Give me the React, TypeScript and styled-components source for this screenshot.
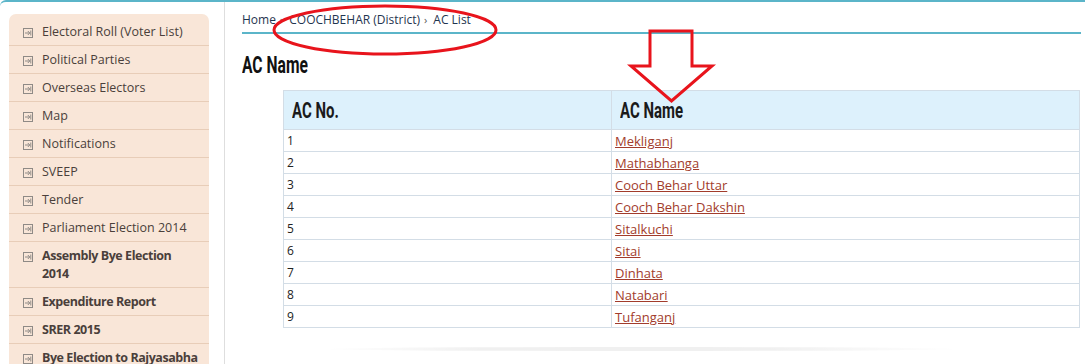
import { FC } from 'react';
import styled, { createGlobalStyle } from 'styled-components';

const GlobalStyle = createGlobalStyle`
  html, body {
    margin: 0;
    padding: 0;
    background: #fff;
    font-family: 'Open Sans', 'DejaVu Sans', sans-serif;
  }
`;

type MenuItem = { label: string; bold?: boolean };

const menu: MenuItem[] = [
  { label: 'Electoral Roll (Voter List)' },
  { label: 'Political Parties' },
  { label: 'Overseas Electors' },
  { label: 'Map' },
  { label: 'Notifications' },
  { label: 'SVEEP' },
  { label: 'Tender' },
  { label: 'Parliament Election 2014' },
  { label: 'Assembly Bye Election 2014', bold: true },
  { label: 'Expenditure Report', bold: true },
  { label: 'SRER 2015', bold: true },
  { label: 'Bye Election to Rajyasabha', bold: true },
];

const acList = [
  'Mekliganj',
  'Mathabhanga',
  'Cooch Behar Uttar',
  'Cooch Behar Dakshin',
  'Sitalkuchi',
  'Sitai',
  'Dinhata',
  'Natabari',
  'Tufanganj',
];

const EnterIcon: FC = () => (
  <svg width="10" height="10" viewBox="0 0 10 10" fill="none">
    <rect x="0.5" y="0.5" width="9" height="9" stroke="#8f8a86" />
    <path d="M2 5H6.5M4.8 3L6.8 5L4.8 7M7.8 2.5V7.5" stroke="#8f8a86" />
  </svg>
);

const App: FC = () => {
  return (
    <>
      <GlobalStyle />
      <Page>
        <Sidebar>
          <Menu>
            {menu.map((item) => (
              <MenuRow key={item.label}>
                <IconBox>
                  <EnterIcon />
                </IconBox>
                <MenuLabel $bold={item.bold}>{item.label}</MenuLabel>
              </MenuRow>
            ))}
          </Menu>
        </Sidebar>
        <Content>
          <Breadcrumb>
            <Crumb>Home</Crumb>
            <Sep>›</Sep>
            <Crumb>COOCHBEHAR (District)</Crumb>
            <Sep>›</Sep>
            <Crumb>AC List</Crumb>
          </Breadcrumb>
          <Heading>
            <Condensed $size={23}>AC Name</Condensed>
          </Heading>
          <Table>
            <colgroup>
              <col style={{ width: 328 }} />
              <col />
            </colgroup>
            <thead>
              <tr>
                <Th>
                  <Condensed $size={22}>AC No.</Condensed>
                </Th>
                <Th>
                  <Condensed $size={22}>AC Name</Condensed>
                </Th>
              </tr>
            </thead>
            <tbody>
              {acList.map((name, i) => (
                <tr key={name}>
                  <Td>{i + 1}</Td>
                  <Td>
                    <AcLink href="#">{name}</AcLink>
                  </Td>
                </tr>
              ))}
            </tbody>
          </Table>
          <Shadow />
        </Content>
        <Annotation width="1085" height="110" viewBox="0 0 1085 110">
          <ellipse
            cx="385"
            cy="28"
            rx="111"
            ry="24"
            fill="none"
            stroke="#e8141c"
            strokeWidth="3"
          />
          <path
            d="M650 29H692V64H712L671.5 99L631 64H650Z"
            fill="none"
            stroke="#e8141c"
            strokeWidth="3"
            strokeLinejoin="miter"
          />
        </Annotation>
      </Page>
    </>
  );
};

export default App;

const Page = styled.div`
  position: relative;
  display: flex;
  width: 1085px;
  height: 364px;
  overflow: hidden;
  border-top: 2px solid #5bb5c9;
  border-top-left-radius: 6px;
  box-sizing: border-box;
`;

const Sidebar = styled.aside`
  width: 225px;
  flex-shrink: 0;
  padding: 12px 0 0 9px;
  box-sizing: border-box;
  border-right: 1px solid #dedede;
`;

const Menu = styled.ul`
  width: 200px;
  margin: 0;
  padding: 4px 0 0;
  list-style: none;
  background: #f9e6d8;
  border-top-left-radius: 7px;
  border-top-right-radius: 7px;
`;

const MenuRow = styled.li`
  display: flex;
  align-items: flex-start;
  padding: 5px 10px 4px 14px;
  border-bottom: 1px solid #e8cdb8;
`;

const IconBox = styled.span`
  display: flex;
  flex-shrink: 0;
  padding-top: 5px;
  margin-right: 9px;
`;

const MenuLabel = styled.span<{ $bold?: boolean }>`
  font-size: 12.5px;
  line-height: 18px;
  color: #4a3f3b;
  font-weight: ${({ $bold }) => ($bold ? 700 : 400)};
  letter-spacing: ${({ $bold }) => ($bold ? '-0.45px' : '0')};
`;

const Content = styled.main`
  flex: 1;
  padding: 0 4px 0 17px;
  min-width: 0;
`;

const Breadcrumb = styled.nav`
  display: flex;
  align-items: center;
  height: 32px;
  padding-top: 4px;
  border-bottom: 2px solid #5bb5c9;
  box-sizing: border-box;
  font-size: 12px;
  color: #1f3550;
`;

const Crumb = styled.span`
  white-space: nowrap;
`;

const Sep = styled.span`
  margin: 0 6px 0 4px;
  font-size: 11px;
  color: #555;
`;

const Heading = styled.h1`
  margin: 15px 0 17px;
  height: 24px;
  line-height: 24px;
  color: #111;
`;

/* tall narrow headline face, squeezed from Roboto */
const Condensed = styled.span<{ $size: number }>`
  display: inline-block;
  font-family: Roboto, 'Liberation Sans', sans-serif;
  font-weight: 700;
  font-size: ${({ $size }) => $size}px;
  white-space: nowrap;
  transform: scaleX(0.68);
  transform-origin: left center;
`;

const Table = styled.table`
  margin-left: 41px;
  width: 797px;
  border-collapse: collapse;
  table-layout: fixed;
  border: 1px solid #d3dde6;
`;

const Th = styled.th`
  height: 38px;
  padding: 0 8px;
  text-align: left;
  background: #ddf1fc;
  border: 1px solid #d3dde6;
  color: #1a1a1a;
`;

const Td = styled.td`
  height: 21px;
  padding: 0 3px;
  border: 1px solid #d3dde6;
  font-size: 12px;
  color: #222;
`;

const AcLink = styled.a`
  color: #a23c2c;
  font-size: 13px;
  text-decoration: underline;
`;

const Shadow = styled.div`
  margin: 19px 0 0 80px;
  width: 640px;
  height: 4px;
  background: linear-gradient(
    to right,
    rgba(0, 0, 0, 0),
    rgba(0, 0, 0, 0.06) 25%,
    rgba(0, 0, 0, 0.06) 70%,
    rgba(0, 0, 0, 0)
  );
  border-radius: 50%;
`;

const Annotation = styled.svg`
  position: absolute;
  left: 0;
  top: 0;
  pointer-events: none;
`;
